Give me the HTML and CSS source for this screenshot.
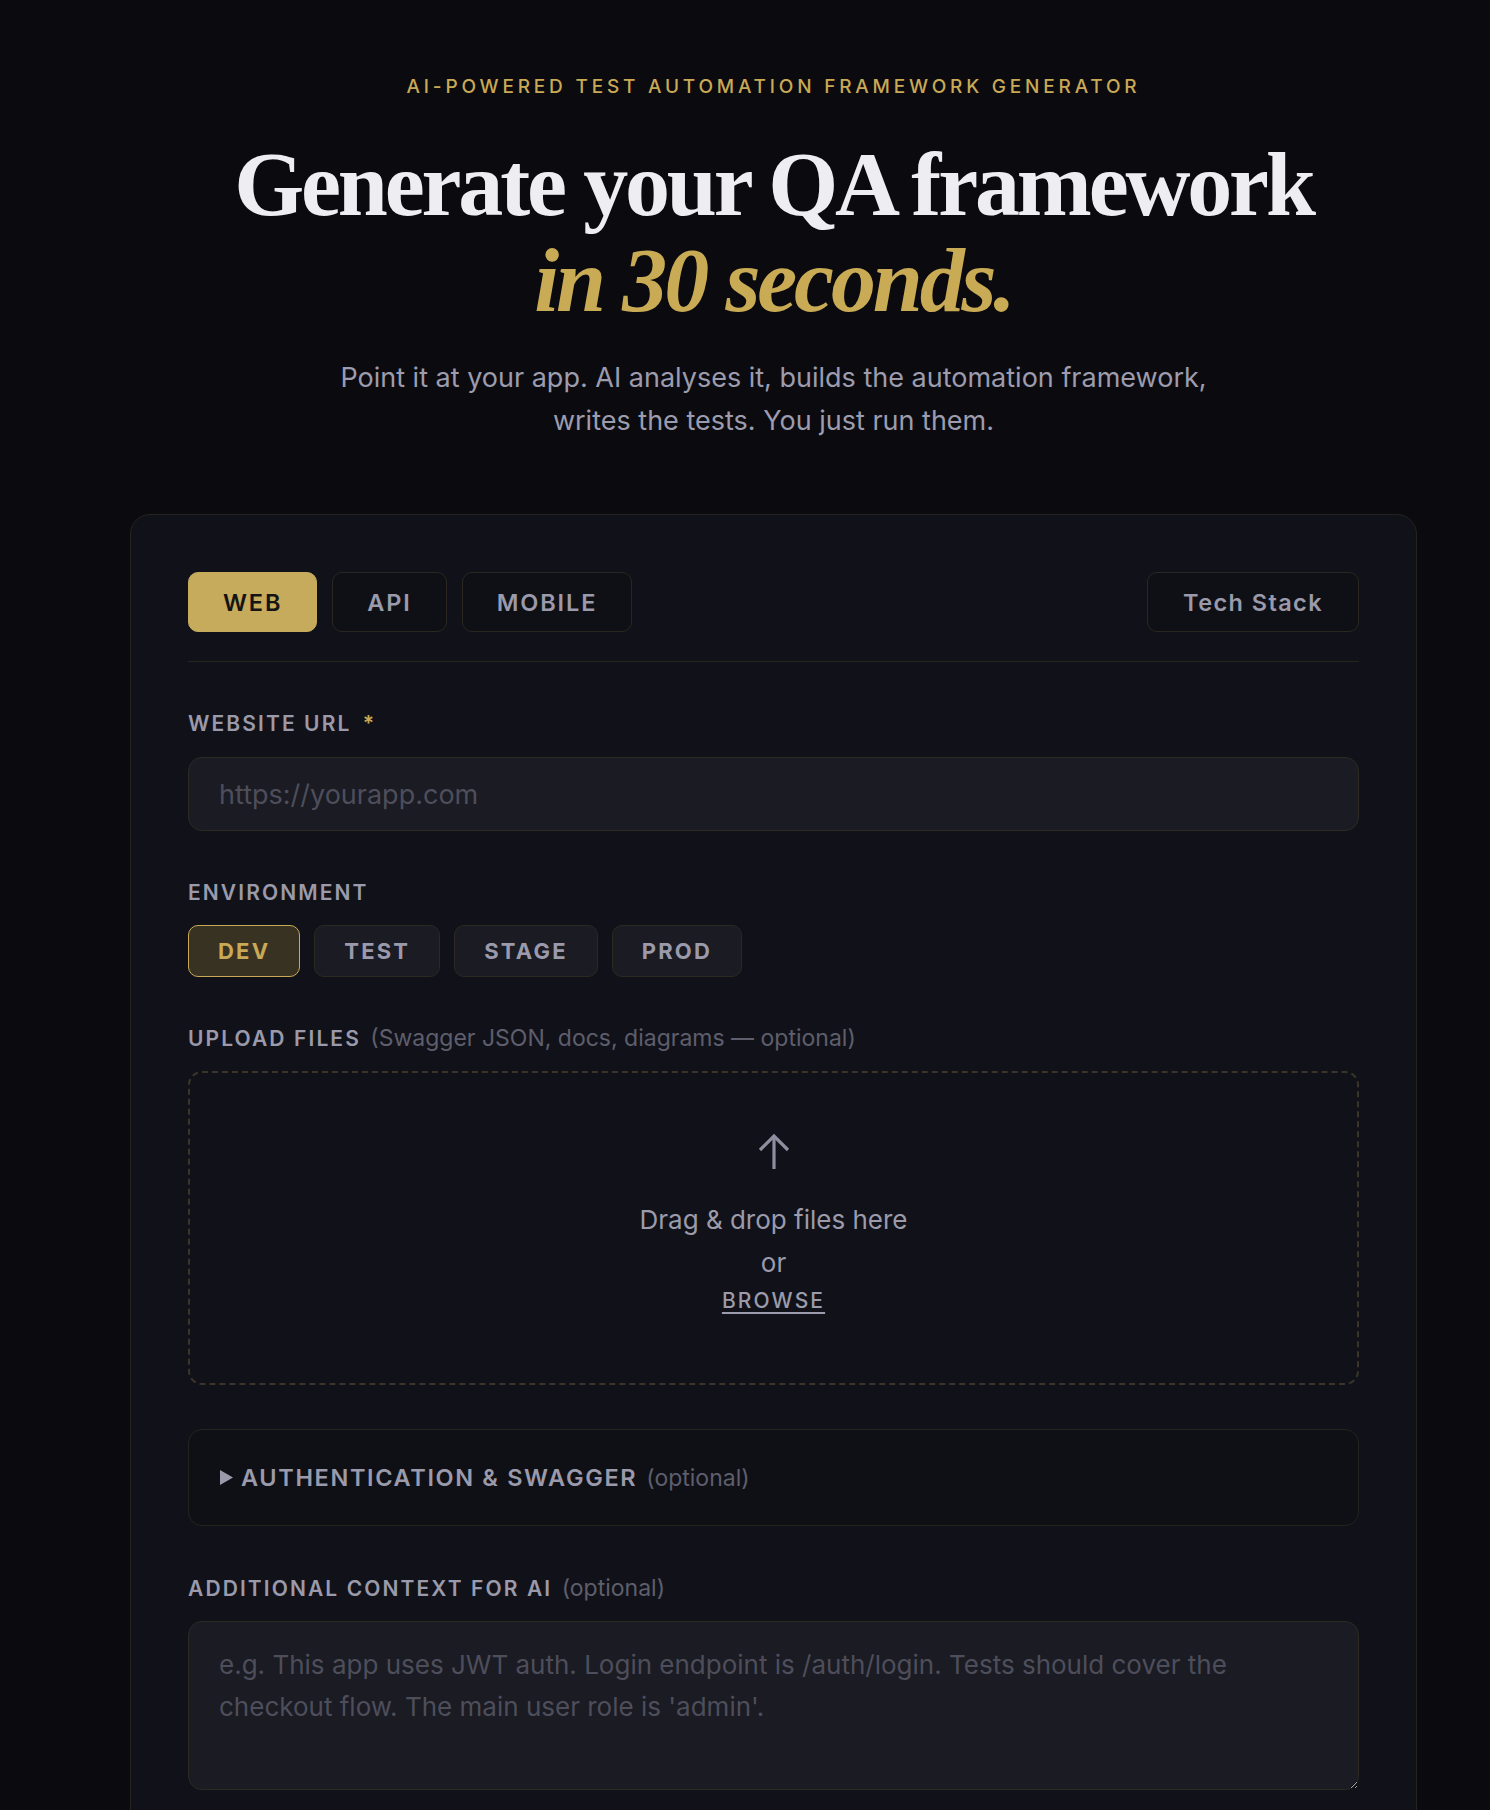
FILE: index.html
```html
<!DOCTYPE html>
<html lang="en">
<head>
<meta charset="utf-8">
<title>QA Framework Generator</title>
<link rel="stylesheet" href="styles.css">
</head>
<body>
<main class="page">
  <header class="hero">
    <p class="eyebrow">AI-POWERED TEST AUTOMATION FRAMEWORK GENERATOR</p>
    <h1 class="title">Generate your QA framework<br><em class="accent">in 30 seconds.</em></h1>
    <p class="lede">Point it at your app. AI analyses it, builds the automation framework,<br>writes the tests. You just run them.</p>
  </header>

  <section class="card">
    <div class="tabs">
      <button class="tab tab-active">WEB</button>
      <button class="tab">API</button>
      <button class="tab">MOBILE</button>
      <button class="tab tab-stack">Tech Stack</button>
    </div>
    <div class="divider"></div>

    <div class="field field-url">
      <label class="label">WEBSITE URL <span class="req">*</span></label>
      <input class="input" type="text" placeholder="https://yourapp.com">
    </div>

    <div class="field field-env">
      <label class="label">ENVIRONMENT</label>
      <div class="envs">
        <button class="env env-active">DEV</button>
        <button class="env">TEST</button>
        <button class="env">STAGE</button>
        <button class="env">PROD</button>
      </div>
    </div>

    <div class="field field-upload">
      <label class="label">UPLOAD FILES <span class="muted">(Swagger JSON, docs, diagrams — optional)</span></label>
      <div class="drop">
        <svg class="drop-icon" width="36" height="38" viewBox="0 0 36 38" fill="none" stroke="currentColor" stroke-width="3.2" stroke-linecap="butt" stroke-linejoin="miter">
          <path d="M18 36V3"/>
          <path d="M4 17L18 3L32 17"/>
        </svg>
        <p class="drop-text">Drag &amp; drop files here</p>
        <p class="drop-or">or</p>
        <span class="browse">BROWSE</span>
      </div>
    </div>

    <details class="auth">
      <summary class="auth-summary"><svg class="caret" width="15" height="17" viewBox="0 0 15 17"><path d="M1 1L14 8.5L1 16Z" fill="currentColor"/></svg>AUTHENTICATION &amp; SWAGGER <span class="muted">(optional)</span></summary>
    </details>

    <div class="field field-context">
      <label class="label">ADDITIONAL CONTEXT FOR AI <span class="muted">(optional)</span></label>
      <textarea class="textarea" placeholder="e.g. This app uses JWT auth. Login endpoint is /auth/login. Tests should cover the checkout flow. The main user role is 'admin'."></textarea>
    </div>
  </section>
</main>
</body>
</html>
```

FILE: styles.css
```css
* { box-sizing: border-box; }

html, body {
  margin: 0;
  background: #0b0b0f;
}

body {
  font-family: "Inter", "Noto Sans", sans-serif;
  color: #9b9bab;
}

.page {
  width: 1287px;
  margin-left: 130px;
  padding-top: 74px;
  padding-bottom: 80px;
}

.hero {
  text-align: center;
}

.eyebrow {
  margin: 0;
  font-size: 19px;
  line-height: 26px;
  font-weight: 500;
  letter-spacing: 0.2em;
  color: #c9a955;
}

.title {
  margin: 37px 0 0;
  font-family: "Liberation Serif", "DejaVu Serif", serif;
  font-weight: 700;
  font-size: 90px;
  line-height: 96px;
  color: #ededf2;
  letter-spacing: -0.035em;
}

.accent {
  font-style: italic;
  font-weight: 700;
  color: #c9aa55;
}

.lede {
  margin: 27px 0 0;
  font-size: 27px;
  line-height: 43px;
  color: #9c9cae;
}

.card {
  margin-top: 72px;
  background: #111219;
  border: 1px solid #25231e;
  border-radius: 20px;
  padding: 57px 57px 60px;
}

.tabs {
  display: flex;
  gap: 15px;
}

.tab {
  height: 60px;
  padding: 0 34px;
  border: 1px solid #2a2720;
  border-radius: 10px;
  background: #0f1016;
  color: #9a9aab;
  font-family: "Inter", sans-serif;
  font-size: 23.5px;
  font-weight: 600;
  letter-spacing: 0.08em;
}

.tab-active {
  background: #c6ab5c;
  border-color: #c6ab5c;
  color: #141414;
}

.tab-stack {
  margin-left: auto;
  letter-spacing: 0.06em;
  padding: 0 35px;
}

.divider {
  margin-top: 29px;
  border-top: 1px solid #27241d;
}

.field {
  display: flex;
  flex-direction: column;
}

.label {
  font-size: 21px;
  line-height: 26px;
  font-weight: 600;
  letter-spacing: 0.1em;
  color: #9a9aab;
}

.req {
  color: #c9a955;
  margin-left: 4px;
}

.muted {
  font-weight: 400;
  letter-spacing: 0;
  color: #5e5e6c;
}

.label .muted {
  font-size: 23px;
  margin-left: 2px;
}

.field-url {
  margin-top: 49px;
  gap: 20px;
}

.input {
  height: 74px;
  padding: 0 30px;
  background: #1a1b23;
  border: 1px solid #2d2a23;
  border-radius: 14px;
  font-family: "Inter", sans-serif;
  font-size: 27px;
  color: #d0d0da;
  outline: none;
}

.input::placeholder,
.textarea::placeholder {
  color: #4e4e5b;
}

.field-env {
  margin-top: 49px;
  gap: 19px;
}

.envs {
  display: flex;
  gap: 14px;
}

.env {
  height: 52px;
  padding: 0 29px;
  border: 1px solid #2c2922;
  border-radius: 10px;
  background: #1a1b23;
  color: #9a9aab;
  font-family: "Inter", sans-serif;
  font-size: 22px;
  font-weight: 700;
  letter-spacing: 0.1em;
}

.env-active {
  background: #383223;
  border-color: #c9a955;
  color: #c9a955;
}

.field-upload {
  margin-top: 48px;
  gap: 19px;
}

.drop {
  height: 314px;
  border: 2px dashed #3a3528;
  border-radius: 14px;
  display: flex;
  flex-direction: column;
  align-items: center;
  padding-top: 60px;
}

.drop-icon {
  color: #8e8e9e;
}

.drop-text {
  margin: 32px 0 0;
  font-size: 26px;
  line-height: 34px;
  color: #9b9bab;
}

.drop-or {
  margin: 9px 0 0;
  font-size: 26px;
  line-height: 34px;
  color: #9b9bab;
}

.browse {
  margin-top: 6px;
  font-size: 21px;
  line-height: 30px;
  font-weight: 500;
  letter-spacing: 0.1em;
  color: #9b9bab;
  text-decoration: underline;
  text-underline-offset: 4px;
}

.auth {
  margin-top: 44px;
  border: 1px solid #25231d;
  border-radius: 14px;
  background: #0f1016;
}

.auth-summary {
  list-style: none;
  height: 95px;
  display: flex;
  align-items: center;
  padding: 0 30px;
  font-size: 23.5px;
  font-weight: 600;
  letter-spacing: 0.07em;
  color: #9a9aab;
  cursor: pointer;
}

.auth-summary::-webkit-details-marker { display: none; }

.auth-summary .muted {
  margin-left: 9px;
  font-size: 23px;
}

.caret {
  margin-right: 7px;
  color: #9a9aab;
}

.field-context {
  margin-top: 49px;
  gap: 19px;
}

.textarea {
  height: 169px;
  padding: 22px 30px;
  background: #1a1b23;
  border: 1px solid #2d2a23;
  border-radius: 14px;
  font-family: "Inter", sans-serif;
  font-size: 26px;
  line-height: 42px;
  color: #d0d0da;
  resize: vertical;
  outline: none;
}
```
